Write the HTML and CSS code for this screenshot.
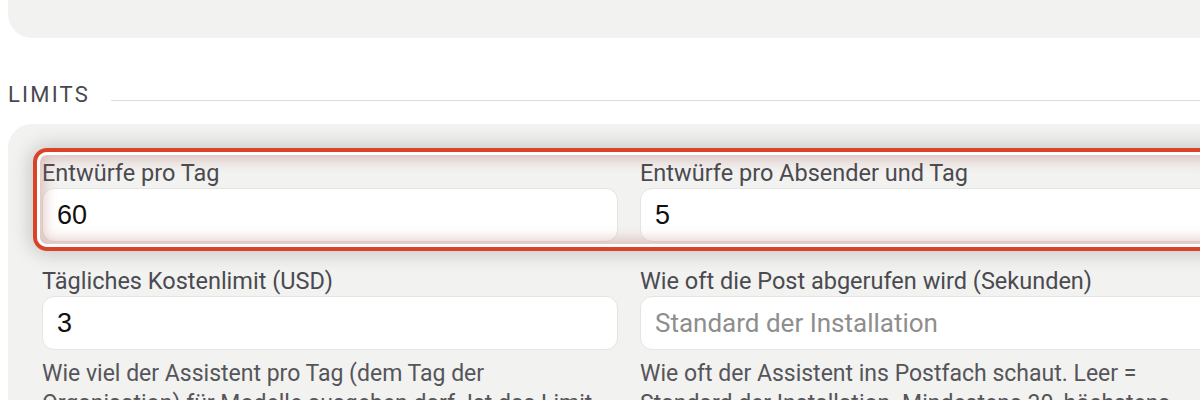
FILE: index.html
```html
<!DOCTYPE html>
<html lang="de">
<head>
  <meta charset="UTF-8">
  <meta name="viewport" content="width=device-width, initial-scale=1.0">
  <title>Einstellungen</title>
  <link rel="stylesheet" href="styles.css">
</head>
<body>
  <div class="page">
    <div class="card top-card"></div>

    <div class="section-title">
      <span>LIMITS</span>
      <div class="rule"></div>
    </div>

    <div class="card">
      <div class="highlight">
        <div class="grid">
          <div class="field">
            <label>Entwürfe pro Tag</label>
            <input type="text" value="60">
          </div>
          <div class="field">
            <label>Entwürfe pro Absender und Tag</label>
            <input type="text" value="5">
          </div>
        </div>
      </div>

      <div class="grid row">
        <div class="field">
          <label>Tägliches Kostenlimit (USD)</label>
          <input type="text" value="3">
          <p class="help">Wie viel der Assistent pro Tag (dem Tag der Organisation) für Modelle ausgeben darf. Ist das Limit erreicht, pausiert er bis morgen.</p>
        </div>
        <div class="field">
          <label>Wie oft die Post abgerufen wird (Sekunden)</label>
          <input type="text" placeholder="Standard der Installation">
          <p class="help">Wie oft der Assistent ins Postfach schaut. Leer = Standard der Installation. Mindestens 30, höchstens 3600.</p>
        </div>
      </div>
    </div>
  </div>
</body>
</html>
```

FILE: styles.css
```css
html, body {
  overflow: hidden;
}
body {
  margin: 0;
  background: #fff;
  font-family: Roboto, "Noto Sans", sans-serif;
  color: #4a4a50;
}
.page {
  width: 1242px;
  padding: 0 8px;
}
.card {
  background: #f2f2f0;
  border-radius: 24px;
  padding: 35px 34px 40px;
}
.top-card {
  height: 60px;
  padding: 0;
  margin-top: -22px;
}

.section-title {
  display: flex;
  margin: 45px 0 17px;
  font-size: 22px;
  line-height: 24px;
  letter-spacing: 2.2px;
  color: #48484f;
}
.section-title .rule {
  flex: 1;
  height: 1px;
  background: #dcdcdc;
  align-self: flex-end;
  margin: 0 0 6px 21px;
}

.grid {
  display: grid;
  grid-template-columns: 1fr 1fr;
  column-gap: 22px;
}
.row {
  margin-top: 25px;
}
.field label {
  display: block;
  font-size: 23.5px;
  line-height: 28px;
  margin-bottom: 1px;
}
.field input {
  display: block;
  box-sizing: border-box;
  width: 100%;
  height: 54px;
  padding: 0 14px;
  border: 1px solid #e4e4e2;
  border-radius: 12px;
  background: #fff;
  font-family: "Liberation Sans", Arial, sans-serif;
  font-size: 27px;
  color: #111;
  outline: none;
}
.field input::placeholder {
  font-family: Roboto, sans-serif;
  font-size: 26px;
  color: #8e8e8e;
}
.help {
  margin: 9px 0 0;
  font-size: 23px;
  line-height: 30px;
  color: #55555a;
}

/* red annotation around the first row */
.highlight {
  position: relative;
  margin: -11px -9px -9px;
  padding: 7px 5px 5px;
  border: 4px solid #d8432a;
  border-radius: 14px;
  box-shadow: 0 0 20px 2px rgba(0, 0, 0, 0.2);
}
.highlight::after {
  content: "";
  position: absolute;
  inset: 0;
  border-radius: 10px;
  box-shadow: inset 0 0 0 3px #fff, inset 0 0 14px 7px rgba(170, 80, 70, 0.32);
  pointer-events: none;
}
```
